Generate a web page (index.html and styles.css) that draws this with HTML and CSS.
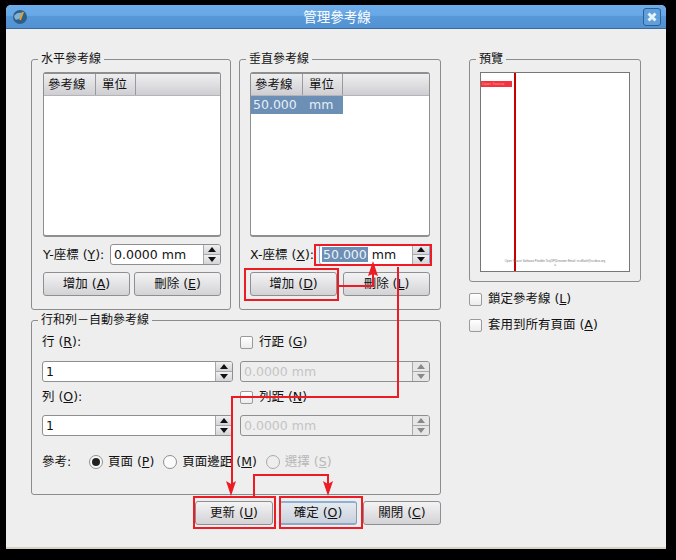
FILE: index.html
```html
<!DOCTYPE html>
<html lang="zh-Hant">
<head>
<meta charset="utf-8">
<title>管理參考線</title>
<link rel="stylesheet" href="styles.css">
</head>
<body>
<div class="window">
  <header class="titlebar">
    <svg class="app-icon" width="14" height="14" viewBox="0 0 14 14"><circle cx="7" cy="7" r="7" fill="#2f5f88"/><path d="M1 6c2-3 5-4 8-3 1 2 0 4-2 5-2 2-4 2-5 1z" fill="#7fb2d4"/><path d="M10 2 7 10" stroke="#e0a030" stroke-width="2"/></svg>
    <div class="title">管理參考線</div>
    <button class="close"><svg width="12" height="12" viewBox="0 0 12 12"><path d="M2.5 2.5l7 7M9.5 2.5l-7 7" stroke="#e8f2fb" stroke-width="3"/></svg></button>
  </header>
  <main class="content">
    <div class="left">
      <div class="top-groups">
        <fieldset class="group guide-group horizontal">
          <legend>水平參考線</legend>
          <div class="list">
            <div class="list-head"><span class="col-a">參考線</span><span class="col-b">單位</span><span class="col-c"></span></div>
          </div>
          <div class="coord-row">
            <span class="coord-label">Y-座標 (<u>Y</u>):</span>
            <div class="spin coord-spin"><div class="spin-text">0.0000 mm</div><div class="spin-btns"><span class="up"></span><span class="down"></span></div></div>
          </div>
          <div class="btn-row">
            <button class="btn">增加 (<u>A</u>)</button>
            <button class="btn">刪除 (<u>E</u>)</button>
          </div>
        </fieldset>
        <fieldset class="group guide-group vertical">
          <legend>垂直參考線</legend>
          <div class="list">
            <div class="list-head"><span class="col-a">參考線</span><span class="col-b">單位</span><span class="col-c"></span></div>
            <div class="list-row"><span class="col-a">50.000</span><span class="col-b">mm</span></div>
          </div>
          <div class="coord-row">
            <span class="coord-label">X-座標 (<u>X</u>):</span>
            <div class="spin coord-spin focus"><div class="spin-text"><span class="sel">50.000</span> mm</div><div class="spin-btns"><span class="up"></span><span class="down"></span></div></div>
          </div>
          <div class="btn-row">
            <button class="btn">增加 (<u>D</u>)</button>
            <button class="btn">刪除 (<u>L</u>)</button>
          </div>
        </fieldset>
      </div>
      <fieldset class="group auto-group">
        <legend>行和列－自動參考線</legend>
        <div class="auto-grid">
          <div class="field-label">行 (<u>R</u>):</div>
          <label class="field-label check-label"><span class="check"></span><span>行距 (<u>G</u>)</span></label>
          <div class="spin"><div class="spin-text">1</div><div class="spin-btns"><span class="up"></span><span class="down"></span></div></div>
          <div class="spin off"><div class="spin-text">0.0000 mm</div><div class="spin-btns"><span class="up"></span><span class="down"></span></div></div>
          <div class="field-label">列 (<u>O</u>):</div>
          <label class="field-label check-label"><span class="check"></span><span>列距 (<u>N</u>)</span></label>
          <div class="spin"><div class="spin-text">1</div><div class="spin-btns"><span class="up"></span><span class="down"></span></div></div>
          <div class="spin off"><div class="spin-text">0.0000 mm</div><div class="spin-btns"><span class="up"></span><span class="down"></span></div></div>
        </div>
        <div class="ref-row">
          <span class="ref-label">參考:</span>
          <label class="radio-label"><span class="radio on"></span><span>頁面 (<u>P</u>)</span></label>
          <label class="radio-label"><span class="radio"></span><span>頁面邊距 (<u>M</u>)</span></label>
          <label class="radio-label disabled"><span class="radio"></span><span>選擇 (<u>S</u>)</span></label>
        </div>
      </fieldset>
      <div class="actions">
        <button class="btn action">更新 (<u>U</u>)</button>
        <button class="btn action default">確定 (<u>O</u>)</button>
        <button class="btn action">關閉 (<u>C</u>)</button>
      </div>
    </div>
    <aside class="right">
      <fieldset class="group preview-group">
        <legend>預覽</legend>
        <div class="page">
          <div class="page-bar">Open Source</div>
          <div class="page-line"></div>
          <div class="page-foot">Open Source Software Flexible Tex(XP)Dreamer Email: scufflash@scribus.org<br>a</div>
        </div>
      </fieldset>
      <label class="opt"><span class="check"></span><span>鎖定參考線 (<u>L</u>)</span></label>
      <label class="opt"><span class="check"></span><span>套用到所有頁面 (<u>A</u>)</span></label>
    </aside>
  </main>
</div>
<svg class="notes" width="676" height="560" viewBox="0 0 676 560">
  <g fill="none" stroke="#ed1c24" stroke-width="2">
    <rect x="315" y="245" width="116" height="20"/>
    <rect x="245" y="269" width="93" height="31"/>
    <rect x="194" y="497" width="81" height="31"/>
    <rect x="280" y="497" width="82" height="31"/>
    <path d="M339 286H373V272"/>
    <path d="M398 267V397H232V484"/>
    <path d="M254 496V475H328V484"/>
  </g>
  <g fill="#ed1c24">
    <path d="M373 261l5 15-5-2-5 2z"/>
    <path d="M231 496l-5-15 5 3 5-3z"/>
    <path d="M328 496l-5-15 5 3 5-3z"/>
  </g>
</svg>
</body>
</html>
```
FILE: styles.css
```css
* { box-sizing: border-box; }
html, body { margin: 0; padding: 0; height: 100%; background: #000; }
body {
  position: relative;
  width: 676px;
  height: 560px;
  overflow: hidden;
  padding: 5px 0 0 6px;
  font: 12.5px/16px "DejaVu Sans", "Noto Sans CJK TC", sans-serif;
  color: #111;
}
u { text-underline-offset: 1px; }
.window {
  width: 660px;
  height: 544px;
  background: #eee;
  border-radius: 5px 5px 0 0;
  border-bottom: 2px solid #d8d2c4;
  overflow: hidden;
}
.titlebar {
  height: 24px;
  display: flex;
  align-items: center;
  padding: 0 5px 0 7px;
  background: linear-gradient(#6cace9 0, #68a8e6 45%, #5798d8 50%, #5292d2 100%);
  border-bottom: 1px solid #3a6a9a;
}
.app-icon { flex: none; }
.title {
  flex: 1;
  text-align: center;
  color: #fff;
  font-size: 13.5px;
  padding-left: 4px;
}
.close {
  flex: none;
  width: 18px;
  height: 18px;
  padding: 0;
  display: flex;
  align-items: center;
  justify-content: center;
  background: #5f9fdc;
  border: 1px solid #2f5f8f;
  border-radius: 3px;
}
.content {
  display: grid;
  grid-template-columns: 410px 172px;
  column-gap: 28px;
  padding: 22px 0 0 25px;
}
.left { display: flex; flex-direction: column; }
.top-groups { display: flex; gap: 8px; }
.group {
  margin: 0;
  min-width: 0;
  border: 1px solid #8c8c8c;
  border-radius: 3px;
}
.group legend {
  margin-left: -4px;
  padding: 0 3px;
  font-size: 12px;
  line-height: 16px;
  height: 16px;
}
.horizontal legend { margin-left: -5px; }
.guide-group { height: 259px; }
.horizontal { width: 200px; padding: 5px 9px 0 11px; }
.vertical { width: 202px; padding: 5px 10px 0; }
.list {
  height: 165px;
  background: #fff;
  border: 2px solid #8f8f8f;
  border-radius: 3px;
  border-right-width: 1px;
  border-left-width: 1px;
}
.list-head {
  display: flex;
  height: 22px;
  background: linear-gradient(#eeeef0, #cfcfd3);
  border-bottom: 1px solid #b5b5b8;
  line-height: 21px;
}
.list-head span { border-right: 1px solid #9a9a9e; }
.col-a { width: 52px; padding-left: 4px; flex: none; }
.col-b { width: 40px; padding-left: 6px; flex: none; }
.list-head .col-c { flex: 1; border-right: 0; }
.list-row {
  display: flex;
  width: 92px;
  height: 18px;
  line-height: 17px;
  background: #6b8fb5;
  color: #e8eef5;
}
.list-row .col-a { padding-left: 2px; }
.coord-row {
  display: flex;
  align-items: center;
  justify-content: space-between;
  margin-top: 7px;
  height: 21px;
}
.coord-spin { width: 111px; }
.spin {
  display: flex;
  height: 21px;
  background: #fff;
  border: 1px solid #8f8f8f;
  border-radius: 3px;
  overflow: hidden;
}
.spin-text {
  flex: 1;
  padding-left: 3px;
  line-height: 19px;
  white-space: nowrap;
}
.spin-btns {
  flex: none;
  width: 17px;
  display: flex;
  flex-direction: column;
  border-left: 1px solid #a8a8ac;
}
.spin-btns span {
  flex: 1;
  display: flex;
  align-items: center;
  justify-content: center;
  background: linear-gradient(#f0f0f2, #d4d4d8);
}
.spin-btns .up { border-bottom: 1px solid #a8a8ac; }
.up::before, .down::before {
  content: "";
  width: 0;
  height: 0;
  border-left: 4px solid transparent;
  border-right: 4px solid transparent;
}
.up::before { border-bottom: 5px solid #111; }
.down::before { border-top: 5px solid #111; }
.focus { border-color: #7ea6cf; }
.focus .spin-text { padding-left: 2px; }
.sel { background: #6b8fb5; color: #eef3f8; padding: 0 1px; }
.off { background: #eee; color: #c4c4c4; }
.off .spin-btns span { background: #e6e6e6; }
.off .up::before { border-bottom-color: #888; }
.off .down::before { border-top-color: #888; }
.btn-row {
  display: grid;
  grid-template-columns: 87px 87px;
  justify-content: space-between;
  margin-top: 7px;
}
.btn {
  height: 24px;
  padding: 0;
  font: inherit;
  color: inherit;
  background: linear-gradient(#f3f3f4, #d3d3d6);
  border: 1px solid #8f8f93;
  border-radius: 3px;
}
.auto-group {
  width: 410px;
  height: 183px;
  margin-top: 2px;
  padding: 6px 10px 0;
}
.auto-grid {
  display: grid;
  grid-template-columns: 191px 190px;
  column-gap: 7px;
  grid-template-rows: 27px 28px 26px 21px;
  align-items: start;
}
.check-label { display: flex; align-items: center; gap: 6px; }
.check {
  flex: none;
  width: 13px;
  height: 13px;
  background: linear-gradient(#fff, #ececec);
  border: 1px solid #9a9a9a;
  border-radius: 2px;
}
.ref-row {
  display: flex;
  align-items: center;
  margin-top: 18px;
  height: 16px;
}
.ref-label { width: 47px; }
.radio-label { display: flex; align-items: center; gap: 5px; margin-right: 9px; }
.radio {
  flex: none;
  width: 14px;
  height: 14px;
  border: 1px solid #8f8f8f;
  border-radius: 50%;
  background: #fbfbfb;
  display: flex;
  align-items: center;
  justify-content: center;
}
.radio.on::before {
  content: "";
  width: 8px;
  height: 8px;
  border-radius: 50%;
  background: #222;
}
.disabled { color: #b8b8b8; }
.disabled .radio { background: #eee; border-color: #aaa; }
.actions {
  display: flex;
  justify-content: flex-end;
  gap: 6px;
  margin-top: 6px;
}
.action { width: 78px; }
.default {
  background: linear-gradient(#e6eaf0, #c9d1dd);
  border-color: #8a9ab0;
  border-top: 2px solid #8fb0d0;
  border-bottom: 2px solid #8fa8c4;
}
.right { display: flex; flex-direction: column; }
.preview-group {
  width: 172px;
  height: 231px;
  padding: 5px 10px 0;
}
.page {
  position: relative;
  height: 200px;
  background: #fff;
  border: 1px solid #777;
}
.page-bar {
  position: absolute;
  left: 0;
  top: 8px;
  width: 31px;
  height: 6px;
  background: #f5333d;
  color: #f0a0a0;
  font-size: 3.5px;
  line-height: 6px;
  padding-left: 1px;
  white-space: nowrap;
}
.page-line {
  position: absolute;
  left: 33px;
  top: 0;
  bottom: 0;
  width: 2px;
  background: #c80000;
}
.page-foot {
  position: absolute;
  left: 0;
  right: 0;
  top: 186px;
  text-align: center;
  color: #777;
  font-size: 2.9px;
  line-height: 4px;
  white-space: nowrap;
  font-family: "Liberation Sans", sans-serif;
}
.opt {
  display: flex;
  align-items: center;
  gap: 6px;
  height: 16px;
  margin-top: 9px;
}
.opt + .opt { margin-top: 10px; }
.notes { position: absolute; left: 0; top: 0; pointer-events: none; }
```
